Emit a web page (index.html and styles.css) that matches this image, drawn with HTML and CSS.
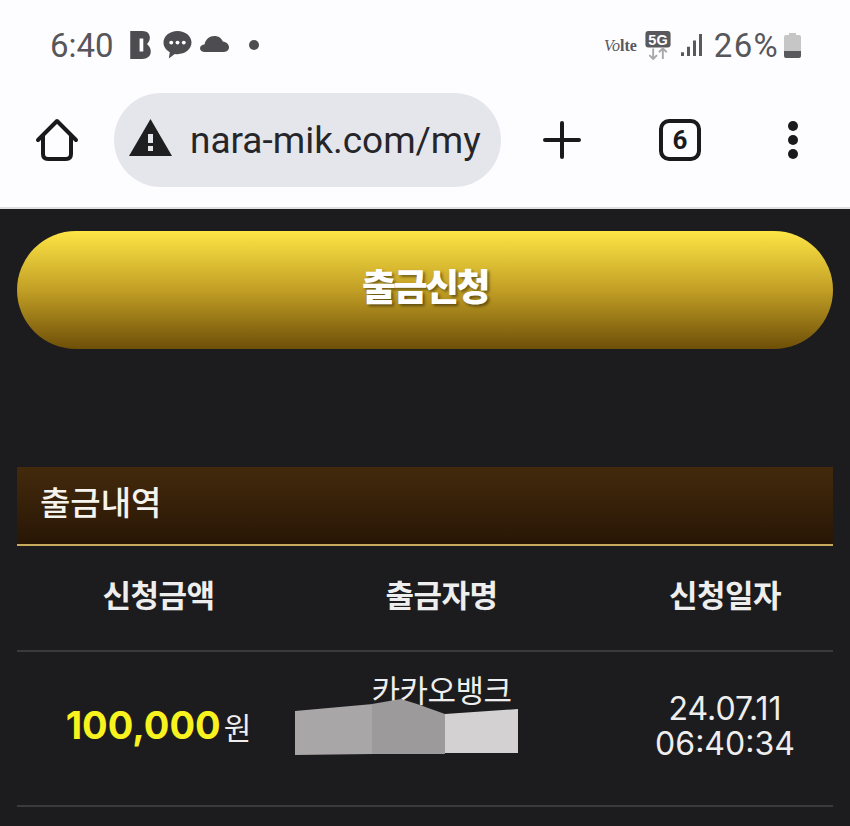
FILE: index.html
```html
<!DOCTYPE html>
<html lang="ko">
<head>
  <meta charset="UTF-8">
  <title>출금신청</title>
  <link rel="stylesheet" href="styles.css">
</head>
<body>

  <div class="status-bar">
    <div class="status-left">
      <span class="clock">6:40</span>
      <svg class="ico-b" width="21" height="28" viewBox="0 0 22 30"><path fill="#4d4c50" d="M0 0H13C18 0 21 3 21 7C21 10 20 12 18 14C20 16 22 18 22 22C22 27 18 30 13 30H0ZM10 8V22H14V8Z"/></svg>
      <svg class="ico-talk" width="29" height="28" viewBox="0 0 29 29"><path fill="#4d4c50" d="M14.500 0C22.500 0 29 5.300 29 12C29 18.700 22.500 24 14.500 24C13.500 24 12.500 23.900 11.600 23.800L5.500 28.500L6.500 22C2.500 19.800 0 16.200 0 12C0 5.300 6.500 0 14.500 0Z"/><circle cx="8" cy="12" r="2" fill="#fff"/><circle cx="14.500" cy="12" r="2" fill="#fff"/><circle cx="21" cy="12" r="2" fill="#fff"/></svg>
      <svg class="ico-cloud" width="29" height="16" viewBox="0 0 29 19" preserveAspectRatio="none"><path fill="#4d4c50" d="M5 19C2 19 0 17 0 14.500C0 12 2 10.200 4.500 10C5.500 4 9.500 0 14.500 0C18.500 0 21.500 2.500 22.800 6.500C26.500 7 29 10 29 13.500C29 16.800 26.800 19 24 19Z"/></svg>
      <span class="dot"></span>
    </div>
    <div class="status-right">
      <span class="volte"><i>Vo</i><b>lte</b></span>
      <svg class="ico-5g" width="26" height="29" viewBox="0 0 26 30"><rect width="26" height="17" rx="3" fill="#59585c"/><text x="13" y="14" class="five-g">5G</text><path d="M8 18V29M4 25L8 29L12 25M18 29V18M14 22L18 18L22 22" fill="none" stroke="#a9a9ac" stroke-width="2"/></svg>
      <svg class="ico-signal" width="22" height="22" viewBox="0 0 22 24" preserveAspectRatio="none"><path fill="#59585c" d="M0 20H3V24H0ZM6 14H9V24H6ZM12 7H15V24H12ZM18 0H21V24H18Z"/></svg>
      <span class="battery-pct">26%</span>
      <svg class="battery" width="17" height="25" viewBox="0 0 17 25"><path fill="#c6c6c6" d="M5 0H12V2H15Q17 2 17 4V18H0V4Q0 2 2 2H5Z"/><path fill="#59585c" d="M0 18H17V23Q17 25 15 25H2Q0 25 0 23Z"/></svg>
    </div>
  </div>

  <div class="toolbar">
    <svg class="ico-home" width="44" height="44" viewBox="0 0 44 44"><path d="M3 22L22 3L41 22M8 18V36Q8 41 13 41H31Q36 41 36 36V18" fill="none" stroke="#1a1a1d" stroke-width="4" stroke-linejoin="round" stroke-linecap="round"/></svg>
    <div class="url-box">
      <svg class="ico-warn" width="43" height="37" viewBox="0 0 43 37"><path fill="#1f1f22" d="M21.500 0L43 37H0Z"/><rect x="19" y="15" width="5" height="9" fill="#e5e6ec"/><rect x="19" y="27" width="5" height="5" fill="#e5e6ec"/></svg>
      <span class="url-text">nara-mik.com/my</span>
    </div>
    <svg class="ico-plus" width="38" height="38" viewBox="0 0 38 38"><path d="M2 19H36M19 2V36" stroke="#1a1a1d" stroke-width="4" stroke-linecap="round"/></svg>
    <div class="tab-count">6</div>
    <div class="menu"><span></span><span></span><span></span></div>
  </div>

  <main class="content">
    <button class="submit-btn">출금신청</button>

    <h2 class="section-title">출금내역</h2>

    <div class="table-row table-head">
      <div>신청금액</div>
      <div>출금자명</div>
      <div class="col-date">신청일자</div>
    </div>

    <div class="table-row table-body">
      <div class="amount"><span class="num">100,000</span>원</div>
      <div class="name">
        <span class="bank">카카오뱅크</span>
        <svg class="redact" width="224" height="58" viewBox="0 0 224 58">
          <path fill="#a8a6a7" d="M0 12L78 5L78 55L0 56Z"/>
          <path fill="#9c9a9b" d="M77 5L106 0L122 5L150 15V55H77Z"/>
          <path fill="#d3d1d2" d="M150 15L223 10V54H150Z"/>
        </svg>
      </div>
      <div class="date col-date">24.07.11<br>06:40:34</div>
    </div>
  </main>

</body>
</html>
```

FILE: styles.css
```css
* {
  box-sizing: border-box;
}

html, body {
  margin: 0;
  height: 826px;
  overflow: hidden;
}

body {
  background: #1c1b1e;
  font-family: Roboto, "Noto Sans CJK KR", sans-serif;
  color: #fff;
}

/* status bar */
.status-bar {
  height: 90px;
  background: #fdfcff;
  display: flex;
  justify-content: space-between;
  align-items: center;
  padding: 0 49px 0 50px;
}

.status-left, .status-right {
  display: flex;
  align-items: center;
}

.clock {
  font-size: 33px;
  color: #57565a;
  margin-right: 16px;
}

.ico-talk {
  margin-left: 12px;
}

.ico-cloud {
  margin-left: 8px;
  margin-bottom: 2px;
}

.dot {
  width: 10px;
  height: 10px;
  border-radius: 50%;
  background: #4d4c50;
  margin-left: 20px;
}

.volte {
  font-size: 16px;
  color: #59585c;
  font-family: "Liberation Serif", serif;
  margin-right: 8px;
  margin-top: 2px;
}

.five-g {
  font-family: "Liberation Sans", sans-serif;
  font-size: 15px;
  font-weight: bold;
  fill: #fff;
  text-anchor: middle;
}

.ico-signal {
  margin-left: 10px;
}

.battery-pct {
  font-size: 33px;
  letter-spacing: 1.300px;
  color: #57565a;
  margin-left: 11px;
}

.battery {
  margin-left: 5px;
}

/* browser toolbar */
.toolbar {
  height: 119px;
  background: #fdfcff;
  border-bottom: 2px solid #dfdfe3;
  display: flex;
  align-items: center;
  padding: 0 0 17px 35px;
}

.ico-home {
  flex: none;
}

.url-box {
  width: 387px;
  height: 94px;
  margin-left: 35px;
  padding: 0 16px 0 15px;
  border-radius: 47px;
  background: #e5e6ec;
  display: flex;
  align-items: center;
}

.ico-warn {
  flex: none;
  margin-bottom: 6px;
}

.url-text {
  margin-left: 18px;
  font-size: 37px;
  color: #26262a;
  white-space: nowrap;
}

.ico-plus {
  flex: none;
  margin-left: 42px;
}

.tab-count {
  width: 42px;
  height: 42px;
  margin-left: 78px;
  border: 4px solid #1a1a1d;
  border-radius: 10px;
  color: #1a1a1d;
  font-family: "Liberation Sans Narrow", Roboto, sans-serif;
  font-size: 26px;
  font-weight: 700;
  display: flex;
  align-items: center;
  justify-content: center;
}

.menu {
  margin-left: 87px;
  display: flex;
  flex-direction: column;
  gap: 4px;
}

.menu span {
  width: 10px;
  height: 10px;
  border-radius: 50%;
  background: #1a1a1d;
}

/* page */
.content {
  padding: 22px 17px 0;
}

.submit-btn {
  display: block;
  width: 100%;
  height: 118px;
  padding-bottom: 11px;
  border: none;
  border-radius: 59px;
  background: linear-gradient(#fde545, #c29f25 50%, #6e4f08);
  color: #fff;
  font-family: "Noto Sans CJK KR", sans-serif;
  font-size: 37px;
  font-weight: 900;
  letter-spacing: -2.500px;
  text-shadow: 2px 2px 3px rgba(0, 0, 0, 0.45);
}

.section-title {
  margin: 118px 0 0;
  height: 79px;
  padding: 0 0 10px 23px;
  background: linear-gradient(#432a0c, #281605);
  border-bottom: 2px solid #c9a95c;
  display: flex;
  align-items: center;
  font-family: "Noto Sans CJK KR", sans-serif;
  font-size: 33px;
  font-weight: 500;
  color: #f5f3ee;
}

.table-row {
  display: grid;
  grid-template-columns: 283px 283px 1fr;
  align-items: center;
  text-align: center;
  font-family: "Noto Sans CJK KR", sans-serif;
  color: #eee;
}

.col-date {
  padding-left: 34px;
}

.table-head {
  height: 106px;
  padding-bottom: 10px;
  border-bottom: 2px solid #3a393c;
  font-size: 31px;
  font-weight: 700;
  letter-spacing: -0.500px;
}

.table-body {
  height: 155px;
  border-bottom: 2px solid #3a393c;
}

.amount {
  font-size: 30px;
  padding-bottom: 7px;
  display: flex;
  justify-content: center;
  align-items: baseline;
  gap: 3px;
}

.num {
  font-family: Inter, sans-serif;
  font-size: 38px;
  font-weight: 700;
  color: #f8f21e;
}

.name {
  position: relative;
  height: 100%;
}

.bank {
  display: block;
  margin-top: 15px;
  font-size: 31px;
  line-height: 44px;
  letter-spacing: -0.500px;
}

.redact {
  position: absolute;
  left: -5px;
  top: 47px;
}

.date {
  font-family: Inter, sans-serif;
  font-size: 32px;
  line-height: 35px;
  padding-bottom: 6px;
}
```
